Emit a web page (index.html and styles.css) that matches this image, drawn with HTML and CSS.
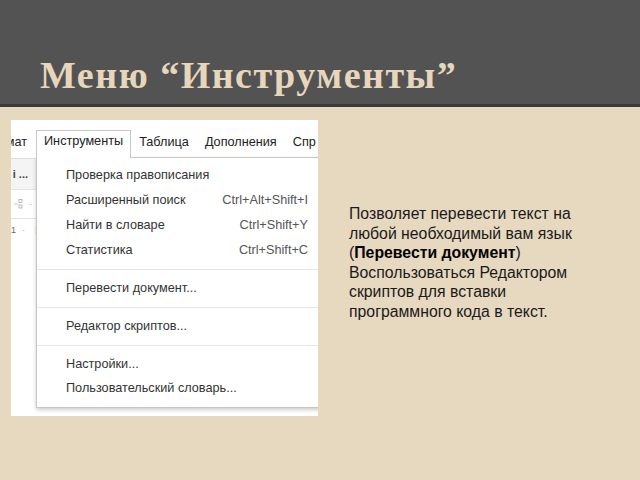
FILE: index.html
```html
<!DOCTYPE html>
<html lang="ru">
<head>
<meta charset="utf-8">
<title>Меню Инструменты</title>
<link rel="stylesheet" href="styles.css">
</head>
<body>
<header class="top">
  <h1 class="title">Меню “Инструменты”</h1>
</header>
<main class="content">
  <div class="shot">
    <div class="menubar">
      <span class="mb-item mb-cut"><span>мат</span></span>
      <span class="mb-item mb-active">Инструменты</span>
      <span class="mb-item">Таблица</span>
      <span class="mb-item">Дополнения</span>
      <span class="mb-item">Спр</span>
    </div>
    <div class="side">
      <div class="side-row side-font"><span>і ...</span></div>
      <div class="side-row side-icon">
        <svg width="12" height="10" viewBox="0 0 12 10"><rect x="5" y="0.5" width="3" height="3" fill="none" stroke="#aaa" stroke-width="0.8"/><rect x="5" y="6" width="3" height="3" fill="none" stroke="#aaa" stroke-width="0.8"/><line x1="0" y1="5" x2="4" y2="5" stroke="#bbb" stroke-width="0.8"/></svg>
        <span class="side-caret">-</span>
      </div>
      <div class="side-row side-ruler"><span>1</span><span class="ruler-dot">·</span><span class="ruler-bar">|</span></div>
    </div>
    <div class="dropdown">
      <div class="dd-group">
        <div class="dd-item"><span>Проверка правописания</span></div>
        <div class="dd-item"><span>Расширенный поиск</span><span class="sc">Ctrl+Alt+Shift+I</span></div>
        <div class="dd-item"><span>Найти в словаре</span><span class="sc">Ctrl+Shift+Y</span></div>
        <div class="dd-item"><span>Статистика</span><span class="sc">Ctrl+Shift+C</span></div>
      </div>
      <div class="dd-group">
        <div class="dd-item"><span>Перевести документ...</span></div>
      </div>
      <div class="dd-group">
        <div class="dd-item"><span>Редактор скриптов...</span></div>
      </div>
      <div class="dd-group dd-last">
        <div class="dd-item"><span>Настройки...</span></div>
        <div class="dd-item"><span>Пользовательский словарь...</span></div>
      </div>
    </div>
  </div>
  <div class="desc">
    <p>Позволяет перевести текст на<br>любой необходимый вам язык<br>(<b>Перевести документ</b>)<br>Воспользоваться Редактором<br>скриптов для вставки<br>программного кода в текст.</p>
  </div>
</main>
</body>
</html>
```
FILE: styles.css
```css
html, body {
  margin: 0;
  padding: 0;
}
body {
  width: 640px;
  height: 480px;
  overflow: hidden;
  background: #e7d8c0;
  font-family: "Liberation Sans", Arial, sans-serif;
}
.top {
  height: 104px;
  background: #535353;
  border-bottom: 3px solid #3a3a3a;
  display: flex;
  align-items: flex-end;
}
.title {
  margin: 0 0 7px 40px;
  font-family: "Liberation Serif", "Times New Roman", serif;
  font-weight: bold;
  font-size: 38px;
  line-height: 44px;
  color: #e6d6bc;
  letter-spacing: 1.5px;
  white-space: nowrap;
}
.content {
  display: flex;
  align-items: flex-start;
  padding: 13px 0 0 11px;
}
.shot {
  position: relative;
  width: 307px;
  height: 296px;
  background: #fff;
  overflow: hidden;
  flex: none;
}
.menubar {
  display: flex;
  height: 38px;
  align-items: flex-end;
  font-size: 12.7px;
  color: #222;
  white-space: nowrap;
}
.mb-item {
  padding: 0 8px 9px 8px;
  flex: none;
}
.mb-cut {
  width: 25px;
  box-sizing: border-box;
  display: flex;
  justify-content: flex-end;
  padding: 0 9px 9px 0;
}
.mb-active {
  position: relative;
  z-index: 3;
  background: #fff;
  border: 1px solid #c6c6c6;
  border-bottom: none;
  padding: 3px 7px 10px 7px;
}
.side {
  width: 25px;
  border-top: 1px solid #ddd;
  color: #333;
  font-size: 11px;
  overflow: hidden;
  white-space: nowrap;
}
.side-row {
  border-bottom: 1px solid #e4e4e4;
}
.side-font {
  height: 30px;
  line-height: 30px;
  background: #f4f4f4;
  display: flex;
  justify-content: flex-end;
  padding-right: 8px;
  font-weight: bold;
  color: #444;
}
.side-icon {
  height: 28px;
  display: flex;
  align-items: center;
  gap: 3px;
  padding-left: 3px;
}
.side-caret {
  color: #bbb;
  font-size: 9px;
}
.side-ruler {
  height: 22px;
  display: flex;
  align-items: center;
  font-size: 9px;
  color: #666;
  border-bottom: none;
}
.ruler-dot {
  margin-left: 6px;
  color: #aaa;
}
.ruler-bar {
  margin-left: 10px;
  color: #bbb;
}
.dropdown {
  position: absolute;
  left: 25px;
  top: 37px;
  width: 292px;
  background: #fff;
  border: 1px solid #c6c6c6;
  box-shadow: 0 2px 4px rgba(0, 0, 0, 0.2);
  z-index: 2;
  font-size: 12.7px;
  color: #333;
}
.dd-group {
  padding: 6px 0;
  border-bottom: 1px solid #e6e6e6;
}
.dd-group:first-child {
  padding-top: 5px;
}
.dd-last {
  border-bottom: none;
  padding-bottom: 7px;
}
.dd-item {
  display: flex;
  justify-content: space-between;
  height: 25px;
  line-height: 25px;
  padding: 0 21px 0 29px;
  white-space: nowrap;
}
.dd-last .dd-item {
  height: 24px;
  line-height: 24px;
}
.sc {
  color: #555;
}
.desc {
  margin: 84px 0 0 31px;
}
.desc p {
  margin: 0;
  font-size: 15.8px;
  line-height: 19.5px;
  color: #1a1a1a;
  white-space: nowrap;
}
.desc b {
  font-weight: bold;
  color: #000;
}
```
